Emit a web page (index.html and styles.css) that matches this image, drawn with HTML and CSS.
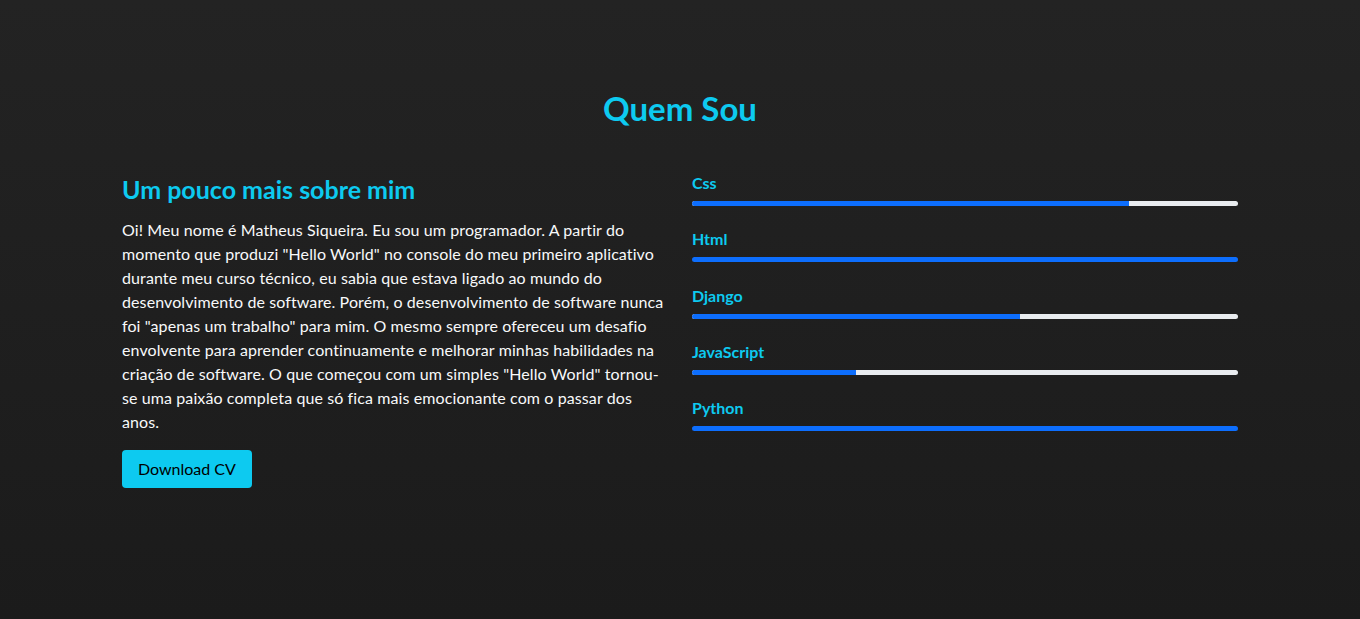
FILE: index.html
```html
<!DOCTYPE html>
<html lang="pt-BR">
<head>
<meta charset="utf-8">
<title>Quem Sou</title>
<link rel="stylesheet" href="styles.css">
</head>
<body>
<section class="about">
  <div class="container">
    <h2 class="section-title">Quem Sou</h2>
    <div class="row">
      <div class="col">
        <h3 class="about-title">Um pouco mais sobre mim</h3>
        <p class="about-text">Oi! Meu nome é Matheus Siqueira. Eu sou um programador. A partir do momento que produzi "Hello World" no console do meu primeiro aplicativo durante meu curso técnico, eu sabia que estava ligado ao mundo do desenvolvimento de software. Porém, o desenvolvimento de software nunca foi "apenas um trabalho" para mim. O mesmo sempre ofereceu um desafio envolvente para aprender continuamente e melhorar minhas habilidades na criação de software. O que começou com um simples "Hello World" tornou-se uma paixão completa que só fica mais emocionante com o passar dos anos.</p>
        <a class="btn-cv" href="#">Download CV</a>
      </div>
      <div class="col skills">
        <div class="skill">
          <span class="skill-name">Css</span>
          <div class="progress"><div class="progress-bar" style="width: 80%"></div></div>
        </div>
        <div class="skill">
          <span class="skill-name">Html</span>
          <div class="progress"><div class="progress-bar" style="width: 100%"></div></div>
        </div>
        <div class="skill">
          <span class="skill-name">Django</span>
          <div class="progress"><div class="progress-bar" style="width: 60%"></div></div>
        </div>
        <div class="skill">
          <span class="skill-name">JavaScript</span>
          <div class="progress"><div class="progress-bar" style="width: 30%"></div></div>
        </div>
        <div class="skill">
          <span class="skill-name">Python</span>
          <div class="progress"><div class="progress-bar" style="width: 100%"></div></div>
        </div>
      </div>
    </div>
  </div>
</section>
</body>
</html>
```

FILE: styles.css
```css
* { box-sizing: border-box; }
html, body { margin: 0; padding: 0; }
body {
  font-family: "Lato", "Noto Sans", sans-serif;
  color: #f8f9fa;
  background: linear-gradient(#232323, #1b1b1b);
  min-height: 619px;
}
.about {
  padding: 89px 0 0;
}
.container {
  width: 1140px;
  margin: 0 auto;
  padding: 0 12px;
}
.section-title {
  margin: 0 0 48px;
  text-align: center;
  color: #0dcaf0;
  font-size: 33px;
  font-weight: 700;
  line-height: 38px;
}
.row {
  display: flex;
  gap: 24px;
}
.col {
  flex: 1 1 0;
  min-width: 0;
}
.about-title {
  margin: 0 0 14px;
  color: #0dcaf0;
  font-size: 25px;
  font-weight: 700;
  line-height: 29px;
}
.about-text {
  margin: 0 0 16px;
  font-size: 16px;
  line-height: 24px;
  letter-spacing: 0.1px;
}
.btn-cv {
  display: inline-block;
  padding: 6px 16px;
  background: #0dcaf0;
  color: #000;
  border-radius: 4px;
  font-size: 16px;
  line-height: 26px;
  text-decoration: none;
}
.skills {
  display: flex;
  flex-direction: column;
  gap: 25.25px;
}
.skill-name {
  display: block;
  color: #0dcaf0;
  font-size: 16px;
  font-weight: 700;
  line-height: 16px;
  margin-bottom: 10px;
}
.progress {
  height: 5px;
  background: #e9ecef;
  border-radius: 3px;
  overflow: hidden;
}
.progress-bar {
  height: 100%;
  background: #0d6efd;
}
```
